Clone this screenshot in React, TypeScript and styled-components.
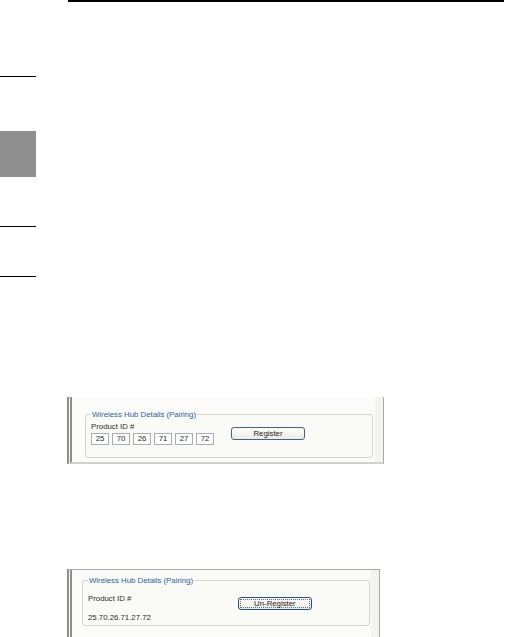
import styled, { createGlobalStyle } from 'styled-components';

const GlobalStyle = createGlobalStyle`
  html, body {
    margin: 0;
    padding: 0;
    background: #ffffff;
    overflow: hidden;
  }
`;

const Page = styled.div`
  display: flex;
  width: 508px;
  height: 637px;
  font-family: 'Liberation Sans', Arial, sans-serif;
`;

const Sidebar = styled.div`
  width: 36px;
  display: flex;
  flex-direction: column;
`;

const SideRule = styled.div<{ $top: number }>`
  margin-top: ${(p) => p.$top}px;
  height: 1px;
  background: #000;
`;

const SideTab = styled.div`
  margin-top: 54px;
  height: 46px;
  background: #8f8f8f;
`;

const Content = styled.div`
  margin-left: 31px;
  display: flex;
  flex-direction: column;
`;

const TopRule = styled.div`
  margin-left: 1px;
  width: 436px;
  height: 2px;
  background: #000;
`;

const Shot = styled.div<{ $top: number; $width: number; $height: number; $topLine?: boolean }>`
  margin-top: ${(p) => p.$top}px;
  width: ${(p) => p.$width}px;
  height: ${(p) => p.$height}px;
  box-sizing: border-box;
  background: #fbfbf9;
  border-left: 5px double #8e8e8e;
  border-right: 1px solid #a9a9a9;
  border-top: ${(p) => (p.$topLine ? '1px solid #a6a6a6' : 'none')};
  border-bottom: ${(p) => (p.$topLine ? 'none' : '2px solid #d2d2cc')};
  box-shadow: inset -8px 0 0 #f3f3ef;
`;

const GroupBox = styled.fieldset<{ $left: number; $top: number; $width: number; $height: number }>`
  margin: ${(p) => p.$top}px 0 0 ${(p) => p.$left}px;
  width: ${(p) => p.$width}px;
  height: ${(p) => p.$height}px;
  box-sizing: border-box;
  min-width: 0;
  padding: 0 0 0 5px;
  border: 1px solid #d5d5ca;
  border-radius: 3px;
  background: #fafaf7;
  display: flex;
`;

const Legend = styled.legend`
  padding: 0 1px;
  margin-left: 0;
  font-size: 7.8px;
  line-height: 9px;
  color: #2f5f95;
`;

const Fields = styled.div`
  display: flex;
  flex-direction: column;
`;

const Label = styled.div<{ $gap: number }>`
  margin-top: ${(p) => p.$gap}px;
  font-size: 7.8px;
  line-height: 9px;
  color: #2a2a2a;
`;

const IdRow = styled.div`
  margin-top: 2px;
  display: flex;
  gap: 3px;
`;

const IdBox = styled.div`
  width: 18px;
  height: 12px;
  box-sizing: border-box;
  border: 1px solid #a7aeb4;
  background: #ffffff;
  font-size: 7.8px;
  line-height: 10px;
  text-align: center;
  color: #2a2a2a;
`;

const Button = styled.div<{ $left: number; $top: number; $focus?: boolean }>`
  margin: ${(p) => p.$top}px 0 0 ${(p) => p.$left}px;
  width: 74px;
  height: 13px;
  box-sizing: border-box;
  border: 1px solid ${(p) => (p.$focus ? '#2a4d78' : '#4a6282')};
  border-radius: 3px;
  background: linear-gradient(#fdfdfb, #ecece6);
  display: flex;
  align-items: center;
  justify-content: center;
  padding: 1px;
`;

const ButtonFace = styled.div<{ $focus?: boolean }>`
  flex: 1;
  align-self: stretch;
  display: flex;
  align-items: center;
  justify-content: center;
  border: 1px dotted ${(p) => (p.$focus ? '#6a6a6a' : 'transparent')};
  font-size: 7.8px;
  color: #222;
`;

const ids = ['25', '70', '26', '71', '27', '72'];

export default function App() {
  return (
    <>
      <GlobalStyle />
      <Page>
        <Sidebar>
          <SideRule $top={76} />
          <SideTab />
          <SideRule $top={49} />
          <SideRule $top={49} />
        </Sidebar>
        <Content>
          <TopRule />
          <Shot $top={395} $width={317} $height={70}>
            <GroupBox $left={13} $top={13} $width={288} $height={48}>
              <Legend>Wireless Hub Details (Pairing)</Legend>
              <Fields>
                <Label $gap={3}>Product ID #</Label>
                <IdRow>
                  {ids.map((id) => (
                    <IdBox key={id}>{id}</IdBox>
                  ))}
                </IdRow>
              </Fields>
              <Button $left={17} $top={8}>
                <ButtonFace>Register</ButtonFace>
              </Button>
            </GroupBox>
          </Shot>
          <Shot $top={105} $width={313} $height={70} $topLine>
            <GroupBox $left={10} $top={6} $width={288} $height={50}>
              <Legend>Wireless Hub Details (Pairing)</Legend>
              <Fields>
                <Label $gap={9}>Product ID #</Label>
                <Label $gap={10}>25.70.26.71.27.72</Label>
              </Fields>
              <Button $left={87} $top={12} $focus>
                <ButtonFace $focus>Un-Register</ButtonFace>
              </Button>
            </GroupBox>
          </Shot>
        </Content>
      </Page>
    </>
  );
}
